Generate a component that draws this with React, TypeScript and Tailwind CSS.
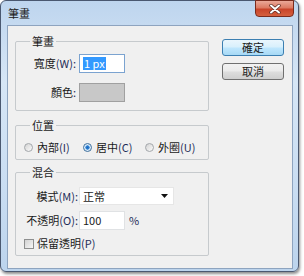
import React from "react";

function Radio({ checked }: { checked?: boolean }) {
  return checked ? (
    <span className="w-[9px] h-[9px] rounded-full border border-[#3d6f9c] bg-[radial-gradient(circle,#1b63b8_0%,#2f86d8_38%,#d4e7f8_48%,#eef5fc_100%)] shrink-0" />
  ) : (
    <span className="w-[9px] h-[9px] rounded-full border border-[#a3a7ab] bg-[linear-gradient(135deg,#d3d3d3,#fbfbfb)] shrink-0" />
  );
}

export default function App() {
  return (
    <div className="w-[304px] h-[276px] bg-white overflow-hidden font-['Noto_Sans_CJK_TC','Noto_Sans',sans-serif] text-[11px] leading-[13px] text-[#1a1a1a]">
      <div className="w-[299px] h-[272px] rounded-[6px] border border-[#4a5870] bg-[linear-gradient(180deg,#bed5ee_0%,#d6e6f6_30%,#c9ddf2_70%,#bcd4ed_100%)] shadow-[1px_2px_3px_rgba(0,0,0,0.45)] flex flex-col">
        <div className="h-[24px] flex items-start">
          <span className="ml-[7px] mt-[6px] text-[11px] leading-[13px] text-[#202020]">筆畫</span>
          <div className="ml-auto mr-[4px] -mt-px w-[39px] h-[17px] rounded-b-[4px] border border-[#7a2b1d] bg-[linear-gradient(180deg,#eaa898_0%,#dc7a63_45%,#c9442a_55%,#d5603e_100%)] flex items-center justify-center">
            <svg width="12" height="10" viewBox="0 0 12 10">
              <path d="M2 1.5 L10 8.5 M10 1.5 L2 8.5" stroke="#5a2a22" strokeWidth="3.4" strokeLinecap="round" />
              <path d="M2 1.5 L10 8.5 M10 1.5 L2 8.5" stroke="#ffffff" strokeWidth="2" strokeLinecap="round" />
            </svg>
          </div>
        </div>
        <div className="ml-[6px] mr-[5px] h-[244px] border border-[#8ea4bf] bg-[#f0f0f0] flex">
          <div className="ml-[7px] w-[194px] flex flex-col">
            {/* 筆畫 group */}
            <div className="relative mt-[15px] h-[70px] border border-[#c6cacd] rounded-[2px] pt-[12px]">
              <span className="absolute left-[14px] -top-[8px] px-[2px] bg-[#f0f0f0] leading-[14px]">筆畫</span>
              <div className="flex items-center h-[19px]">
                <span className="w-[63px] pr-[3px] text-right">寬度<span className="text-[#1f2d58]">(W):</span></span>
                <div className="w-[46px] h-[19px] border border-[#7ba3d0] bg-white flex items-center">
                  <span className="ml-[3px] px-[1px] bg-[#3399ff] text-white leading-[13px]">1 px</span>
                </div>
              </div>
              <div className="flex items-center h-[19px] mt-[10px]">
                <span className="w-[63px] pr-[3px] text-right">顏色<span className="text-[#1f2d58]">:</span></span>
                <div className="w-[46px] h-[19px] border border-[#a0a0a0] bg-[#c8c8c8]" />
              </div>
            </div>
            {/* 位置 group */}
            <div className="relative mt-[14px] h-[35px] border border-[#c6cacd] rounded-[2px] pt-[15px] pl-[8px]">
              <span className="absolute left-[14px] -top-[8px] px-[2px] bg-[#f0f0f0] leading-[14px]">位置</span>
              <div className="flex items-center h-[13px]">
                <div className="w-[59px] flex items-center gap-[4px]">
                  <Radio />
                  <span>內部<span className="text-[#1f2d58]">(I)</span></span>
                </div>
                <div className="w-[62px] flex items-center gap-[4px]">
                  <Radio checked />
                  <span>居中<span className="text-[#1f2d58]">(C)</span></span>
                </div>
                <div className="flex items-center gap-[4px]">
                  <Radio />
                  <span>外圈<span className="text-[#1f2d58]">(U)</span></span>
                </div>
              </div>
            </div>
            {/* 混合 group */}
            <div className="relative mt-[12px] h-[84px] border border-[#c6cacd] rounded-[2px] pt-[14px]">
              <span className="absolute left-[14px] -top-[8px] px-[2px] bg-[#f0f0f0] leading-[14px]">混合</span>
              <div className="flex items-center h-[18px]">
                <span className="w-[63px] pr-[1px] text-right">模式<span className="text-[#1f2d58]">(M):</span></span>
                <div className="w-[95px] h-[18px] border border-[#e6e6e6] bg-white flex items-center pl-[3px] pr-[5px]">
                  <span>正常</span>
                  <svg className="ml-auto" width="7" height="4" viewBox="0 0 7 4">
                    <path d="M0 0 H7 L3.5 4 Z" fill="#111" />
                  </svg>
                </div>
              </div>
              <div className="flex items-center h-[19px] mt-[6px]">
                <span className="w-[63px] pr-[1px] text-right">不透明<span className="text-[#1f2d58]">(O):</span></span>
                <div className="w-[46px] h-[19px] border border-[#e0e2e4] bg-white flex items-center pl-[3px]">
                  <span>100</span>
                </div>
                <span className="ml-[4px] text-[#1f2d58]">%</span>
              </div>
              <div className="flex items-center h-[13px] mt-[7px] pl-[8px]">
                <span className="w-[10px] h-[10px] border border-[#8e8f8f] bg-[linear-gradient(135deg,#d2d2d2,#f7f7f7)]" />
                <span className="ml-[3px]">保留透明<span className="text-[#1f2d58]">(P)</span></span>
              </div>
            </div>
          </div>
          <div className="ml-[13px] mt-[13px] flex flex-col">
            <button className="w-[62px] h-[17px] rounded-[3px] border border-[#3c7fb1] bg-[linear-gradient(180deg,#eaf6fd_0%,#d9f0fc_45%,#bee6fd_55%,#a7d9f5_100%)] leading-[13px] text-[#1a1a1a] flex items-center justify-center">
              確定
            </button>
            <button className="mt-[7px] w-[62px] h-[17px] rounded-[3px] border border-[#707070] bg-[linear-gradient(180deg,#f2f2f2_0%,#ebebeb_45%,#dddddd_55%,#cfcfcf_100%)] leading-[13px] text-[#1a1a1a] flex items-center justify-center">
              取消
            </button>
          </div>
        </div>
      </div>
    </div>
  );
}
